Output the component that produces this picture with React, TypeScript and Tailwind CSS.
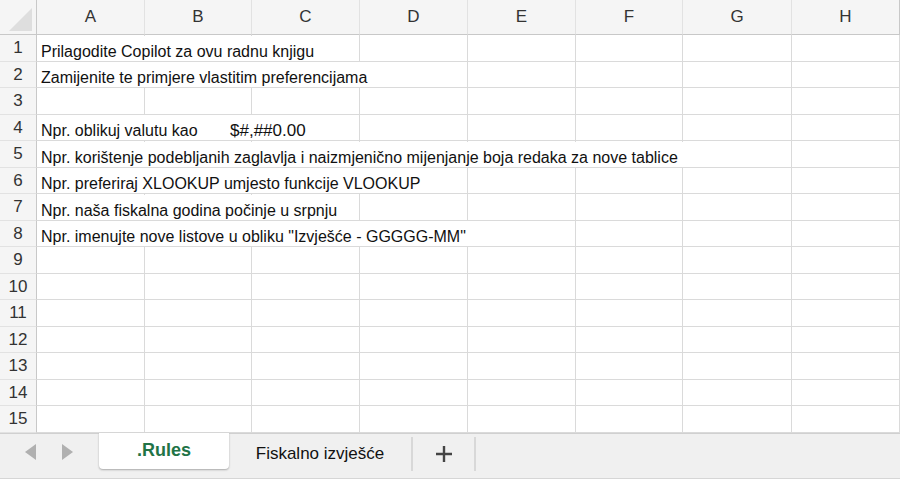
import React from "react"

const cols = ["A", "B", "C", "D", "E", "F", "G", "H"]

const rows: Record<number, string> = {
  1: "Prilagodite Copilot za ovu radnu knjigu",
  2: "Zamijenite te primjere vlastitim preferencijama",
  4: "Npr. oblikuj valutu kao",
  5: "Npr. korištenje podebljanih zaglavlja i naizmjenično mijenjanje boja redaka za nove tablice",
  6: "Npr. preferiraj XLOOKUP umjesto funkcije VLOOKUP",
  7: "Npr. naša fiskalna godina počinje u srpnju",
  8: 'Npr. imenujte nove listove u obliku "Izvješće - GGGGG-MM"',
}

const font = { fontFamily: '"Liberation Sans", Arial, sans-serif' }

const App = () => {
  return (
    <div className="w-[900px] h-[479px] bg-white overflow-hidden flex flex-col text-[#111]" style={font}>
      {/* sheet grid */}
      <div className="grid grid-cols-[37px_108px_107px_108px_108px_108px_107px_109px_1fr] grid-rows-[35px_repeat(15,26.53px)] border-b border-[#d0d0d0]">
        <div className="bg-[#f5f5f5] border-r border-b border-[#c8c8c8] relative">
          <svg className="absolute left-[9px] top-[8px]" width="24" height="24" viewBox="0 0 24 24">
            <polygon points="23,0 23,23 0,23" fill="#dedede" />
          </svg>
        </div>
        {cols.map((c, i) => (
          <div
            key={c}
            className={`bg-[#f5f5f5] border-b border-[#c8c8c8] flex items-center justify-center text-[17px] text-[#333] ${i < 7 ? "border-r border-r-[#e2e2e2]" : "border-r border-r-[#c8c8c8]"}`}
          >
            {c}
          </div>
        ))}
        {Array.from({ length: 15 }, (_, r) => r + 1).map((r) => (
          <React.Fragment key={r}>
            <div className="bg-[#f5f5f5] border-r border-b border-[#c8c8c8] border-b-[#e2e2e2] flex items-center justify-center text-[17px] text-[#333]">
              {r}
            </div>
            {cols.map((c, i) => (
              <div key={c} className="border-r border-b border-[#dadada] flex items-end whitespace-nowrap overflow-visible">
                {i === 0 && rows[r] && (
                  <span className="relative z-10 bg-white pl-[4px] pr-[10px] h-[25px] flex items-end pb-[1px] text-[16px] leading-[16px]">
                    {rows[r]}
                  </span>
                )}
                {i === 1 && r === 4 && (
                  <span className="relative z-10 bg-white ml-[81px] pl-[4px] pr-[10px] h-[25px] flex items-end pb-[1px] text-[17px] leading-[17px] font-medium">
                    $#,##0.00
                  </span>
                )}
              </div>
            ))}
          </React.Fragment>
        ))}
      </div>

      {/* sheet tabs */}
      <div className="flex-1 bg-[#f0f0f0] flex items-start border-b border-[#d6d6d6] relative">
        <div className="flex items-center gap-[24px] pl-[25px] h-[36px]">
          <svg width="12" height="16" viewBox="0 0 12 16">
            <polygon points="11,0 11,16 0,8" fill="#b0b0b0" />
          </svg>
          <svg width="12" height="16" viewBox="0 0 12 16">
            <polygon points="1,0 1,16 12,8" fill="#b0b0b0" />
          </svg>
        </div>
        <div className="ml-[26px] w-[130px] h-[36px] bg-white rounded-b-[4px] shadow-[0_1px_2px_rgba(0,0,0,0.3)] flex items-center justify-center text-[18px] font-bold text-[#217346] -mt-px">
          .Rules
        </div>
        <div className="w-[184px] h-[34px] flex items-center justify-center text-[17px] text-[#111] border-r-2 border-[#d8d8d8] mt-[3px]">
          Fiskalno izvješće
        </div>
        <div className="w-[63px] h-[34px] flex items-center justify-center border-r-2 border-[#d8d8d8] mt-[3px]">
          <svg width="18" height="18" viewBox="0 0 18 18">
            <path d="M9 1v16M1 9h16" stroke="#444" strokeWidth="2.4" />
          </svg>
        </div>
      </div>
    </div>
  )
}

export default App
